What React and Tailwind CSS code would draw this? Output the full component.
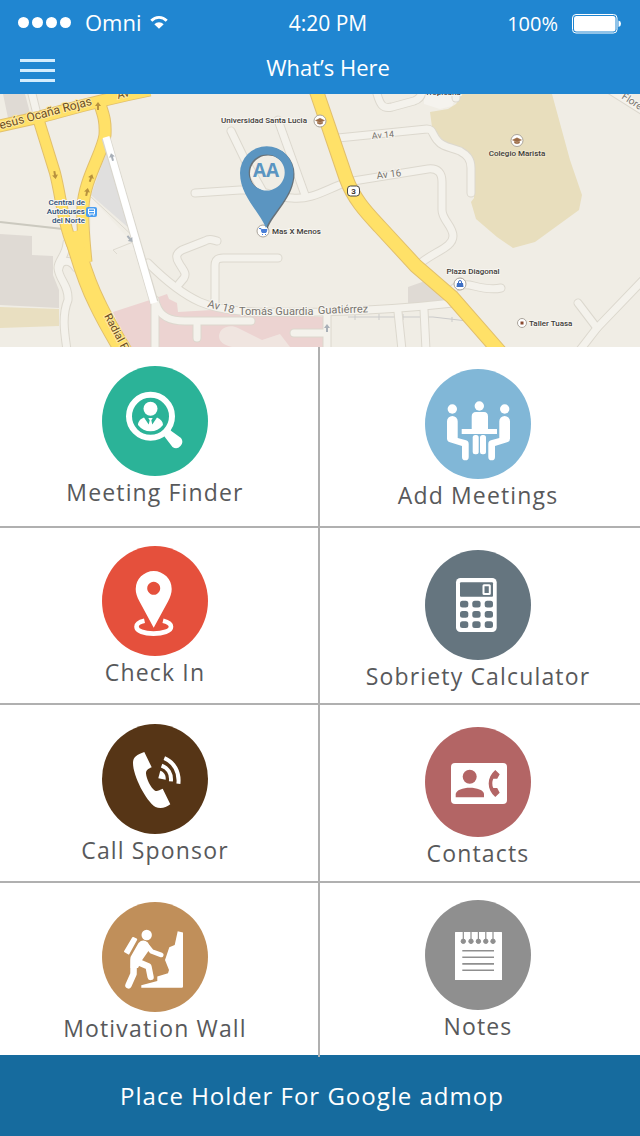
import React from "react";

const minorRoads = [
  "M31 90 L39 122",
  "M67 243 C66 256 58 260 58 268 C59 280 69 285 68 300 C62 315 64 330 67 350",
  "M76 268 C70 258 60 260 59 268",
  "M338 138 L427 129 C433 129 432 134 437 140 C443 148 452 147 460 151 C467 155 471 159 471 168 V193",
  "M195 193 L240 190 C262 189 275 197 292 198 C312 200 325 190 347 182 L428 169 C438 168 442 173 442 182 V210 C442 220 453 226 453 236 C453 247 436 251 422 262",
  "M231 131 L245 160 L262 190",
  "M278 120 L305 195",
  "M217 241 C212 240 210 238 205 241 L182 250 C175 254 176 258 179 263 C183 270 187 273 184 278 L179 284",
  "M278 258 H223 C217 258 215 260 215 266 V304",
  "M155 300 V350",
  "M156 304 C160 317 170 321 185 321 H251",
  "M197 322 V338",
  "M325 333 H294",
  "M327 313 V350",
  "M398 312 L402 350",
  "M424 310 L426 350",
  "M452 290 C458 284 466 284 474 286 S492 290 501 288",
  "M645 278 L597 328 L580 350",
  "M578 303 L597 328",
  "M376 90 C380 106 383 109 392 107 L414 101 C420 99 422 95 422 90",
  "M610 90 L645 112",
  "M456 88 V98",
  "M148 263 C160 275 180 293 200 302 C230 315 270 312 320 312 C360 311 400 309 453 303",
];

const yellowRoads = [
  { d: "M-5 127 L40 117 C60 112 95 101 150 90", w: 11 },
  { d: "M38 118 L55 173 C62 200 63 230 78 257", w: 10 },
  { d: "M98 98 C102 112 106 118 105 135 C103 152 84 180 83 207 C82 225 84 240 86 262", w: 11 },
  { d: "M72 232 C80 262 88 285 97 303 C105 320 112 332 124 352", w: 16 },
  { d: "M316 90 L328 125 L346 178 C354 200 368 214 380 227 L416 266 L452 297 L500 352", w: 13 },
];

function Poi({ x, y, children }) {
  return (
    <g>
      <circle cx={x} cy={y} r="6" fill="#fff" stroke="#aaa49b" />
      {children}
    </g>
  );
}

function Cap({ x, y }) {
  return (
    <path
      d={`M${x - 4.5} ${y - 0.5} l4.5 -2.2 l4.5 2.2 l-4.5 2 z M${x - 2.5} ${y + 1} v1.5 q2.5 1.5 5 0 v-1.5 l-2.5 1z`}
      fill="#9b6a45"
      stroke="#9b6a45"
      strokeWidth="0.5"
    />
  );
}

function Arrow({ x, y, angle = 0, fill = "#b8923e" }) {
  return (
    <path
      d="M0 -4 L3 0 H1 V4 H-1 V0 H-3Z"
      fill={fill}
      transform={`translate(${x} ${y}) rotate(${angle})`}
    />
  );
}

function MapView() {
  return (
    <svg
      viewBox="0 94 640 253"
      className="block w-full font-[Roboto,sans-serif]"
      role="img"
      aria-label="Map of nearby meetings"
    >
      <rect y="94" width="640" height="253" fill="#f0ede5" />
      <path d="M3 94 H25 L30 113 L8 118Z M0 234 L32 236 V255 L53 256 V275 L59 290 V308 L0 305Z M408 287 L425 281 L450 303 L408 304Z" fill="#dfdad4" />
      <path d="M0 307 L59 309 V326 L0 328Z" fill="#e9dfc1" />
      <path d="M107 150 L91 195 L139 237Z" fill="#e0dfde" />
      <path d="M91 197 L139 250 L91 250Z" fill="#f3f0ea" />
      <path d="M91 197 L137 240 M138 240 L113 250 L117 254" fill="none" stroke="#dedad0" strokeWidth="1" />
      <path d="M113 312 L153 299 L167 294 L169 299 L177 303 L178 312 L212 310 L323 317 V347 H128Z" fill="#ecd3d1" />
      <path d="M219 336 C220 327 230 324 238 328 L262 340 L280 334 L290 347 H232 C224 345 219 342 219 336Z" fill="#f0e5e0" />
      <path d="M424 94 H458 L452 106 L440 109 L424 104Z" fill="#f5f3ee" />
      <path d="M462 94 L456 104 L448 109 L430 112 L432 127 L445 143 L462 152 L474 165 V198 L471 202 L476 219 L497 237 L513 248 L535 242 L579 210 L582 195 L570 160 L552 94Z" fill="#e8debd" />
      <path d="M0 222 L63 229" stroke="#cbc9bf" strokeWidth="2" />
      <path d="M348 317 H433 L467 321 M355 314 v6 M379 314 v6 M403 314 v6 M452 317 v5" stroke="#cbcbcb" fill="none" />

      <g fill="none" strokeLinecap="round" strokeLinejoin="round">
        {minorRoads.map((d) => (
          <path key={d} d={d} stroke="#dcd8ce" strokeWidth="9" />
        ))}
        {minorRoads.map((d) => (
          <path key={d} d={d} stroke="#f4f2ec" strokeWidth="7" />
        ))}
      </g>
      <g fill="none">
        {yellowRoads.map((r) => (
          <path key={r.d} d={r.d} stroke="#e2c06c" strokeWidth={r.w + 2} />
        ))}
        {yellowRoads.map((r) => (
          <path key={r.d} d={r.d} stroke="#ffe168" strokeWidth={r.w} />
        ))}
        <path d="M106 138 L154 302" stroke="#d9d6cd" strokeWidth="9" />
        <path d="M106 137 L154 303" stroke="#fff" strokeWidth="7" />
      </g>

      <Arrow x={55} y={175} angle={170} />
      <Arrow x={98} y={106} />
      <Arrow x={91} y={178} angle={18} />
      <Arrow x={87} y={192} angle={12} />
      <Arrow x={112} y={157} angle={-15} fill="#a9b0b8" />
      <Arrow x={130} y={239} angle={140} fill="#a9b0b8" />
      <Arrow x={327} y={328} fill="#a9b0b8" />

      <g fill="#6b4d1e" stroke="#ffe9a0" strokeWidth="2" paintOrder="stroke" fontSize="11">
        <text transform="translate(-6 131) rotate(-15)" fontSize="12">Jesús Ocaña Rojas</text>
        <text transform="translate(118 99) rotate(-14)">Av</text>
        <text transform="translate(104 316) rotate(62)">Radial Francisco</text>
      </g>
      <g fill="#77746e" stroke="#f7f5f0" strokeWidth="2" paintOrder="stroke">
        <text transform="translate(372 139) rotate(-5)" fontSize="9">Av 14</text>
        <text transform="translate(377 179) rotate(-7)" fontSize="10">Av 16</text>
        <text transform="translate(207 307) rotate(14)" fontSize="11">Av 18</text>
        <text x="239" y="315" fontSize="11">Tomás Guardia</text>
        <text transform="translate(318 314) rotate(-2)" fontSize="11">Guatiérrez</text>
        <text transform="translate(621 98) rotate(33)" fontSize="10">Flores</text>
      </g>
      <g fill="#3f3d3a" stroke="#f7f5f0" strokeWidth="2" paintOrder="stroke" fontSize="8" fontWeight="500">
        <text x="221" y="123">Universidad Santa Lucia</text>
        <text x="272" y="234">Mas X Menos</text>
        <text x="517" y="156" textAnchor="middle" stroke="#eee6cd">Colegio Marista</text>
        <text x="473" y="274" textAnchor="middle">Plaza Diagonal</text>
        <text x="529" y="326">Taller Tuasa</text>
        <text x="425" y="95">Tropicana</text>
      </g>
      <g fill="#2c4f78" stroke="#f7f5f0" strokeWidth="2" paintOrder="stroke" fontSize="8" fontWeight="500" textAnchor="end">
        <text x="85" y="205">Central de</text>
        <text x="85" y="214">Autobuses</text>
        <text x="85" y="223">del Norte</text>
      </g>

      <rect x="86" y="207" width="11" height="10" rx="2" fill="#4a9df0" />
      <path d="M88.5 209 h6 v5 h-6z M89 215 h1.5 M93 215 h1.5" fill="none" stroke="#fff" />
      <path d="M89 211.500 h5" stroke="#fff" />
      <Poi x={320} y={121}><Cap x={320} y={121} /></Poi>
      <Poi x={517} y={140.5}><Cap x={517} y={140.5} /></Poi>
      <Poi x={263} y={231}>
        <path d="M259 228.500 h2 l1 4 h4 l1 -3 h-5" fill="#4a7fd8" stroke="#4a7fd8" />
        <path d="M262 234.500 h1 M265 234.500 h1" stroke="#4a7fd8" />
      </Poi>
      <Poi x={460} y={284}>
        <path d="M457 283 h6 l0.500 4 h-7z" fill="#3d6fc4" />
        <path d="M458.500 283 v-1 a1.500 1.500 0 0 1 3 0 v1" fill="none" stroke="#3d6fc4" />
      </Poi>
      <circle cx="522" cy="323" r="4.500" fill="#fff" stroke="#aaa49b" />
      <rect x="520.500" y="321.500" width="3" height="3" fill="#8a4a30" />
      <rect x="347.500" y="186" width="12" height="10" rx="3" fill="#fff" stroke="#4a4844" />
      <text x="353.500" y="194" textAnchor="middle" fontSize="8" fontWeight="700" fill="#3a3834">3</text>

      <g fillRule="evenodd">
        <path
          d="M267.500 229 C262 213 241 197 241 174 A26.750 26.750 0 0 1 294.500 174 C294.500 197 273 214 267.500 229Z M268 155.500 a18 18 0 1 0 0.010 0Z"
          fill="#3a4854"
          opacity="0.75"
        />
        <path
          d="M266 228 C260 212 240 196 240 173 A26.750 26.750 0 0 1 293.500 173 C293.500 196 272 213 266 228Z M266.700 154.500 a18 18 0 1 0 0.010 0Z"
          fill="#5b95c1"
        />
        <text x="266" y="177" textAnchor="middle" fontSize="19" fontWeight="700" fill="#5b95c1" fontFamily="Open Sans, sans-serif">AA</text>
      </g>
    </svg>
  );
}

const FinderIcon = () => (
  <>
    <circle cx="48.500" cy="50.300" r="21.500" fill="none" stroke="#fff" strokeWidth="6" />
    <circle cx="48.500" cy="42.700" r="7" />
    <path d="M42 51.500 C37.500 53 36 56.500 36 59 Q41 65.300 48.500 65.300 T61 59 C61 56 59 53 55 51.500 L50.300 58.500 L49.300 54.300 L50.700 52 H46.300 L47.700 54.300 L46.700 58.500Z" />
    <path d="M61 68.500 L67 62.500 L69.300 65 L79 72 A6.300 6.300 0 0 1 70.500 81 L63 71.300Z" />
  </>
);

const seated =
  "M22 52.300 A5.300 5.300 0 0 1 32.700 52.300 V69 L41 71.300 Q43.700 72 43.700 75 V88 A3.300 3.300 0 0 1 37 88 V77 L25 73.300 Q22 72.500 22 69.500Z";

const MeetingIcon = () => (
  <>
    <circle cx="27.300" cy="40" r="4.700" />
    <circle cx="54.300" cy="37" r="4.700" />
    <circle cx="79.700" cy="40" r="4.700" />
    <path d={seated} />
    <path d={seated} transform="translate(107 0) scale(-1 1)" />
    <path d="M46.700 47.500 Q46.700 43 51 43 H59 Q63 43 63 47.500 V60 H72 V65 H36.700 V60 H46.700Z" />
    <rect x="47.700" y="66" width="6" height="19.300" rx="2.500" />
    <rect x="55" y="66" width="6" height="19.300" rx="2.500" />
  </>
);

const CheckInIcon = () => (
  <>
    <path
      d="M51.700 81.700 L37.500 55.500 C35 51 33.700 47 33.700 43 A18 18 0 0 1 69.700 43 C69.700 47 68.400 51 66 55.500Z M51.700 35.800 a6.500 6.500 0 1 0 0.010 0Z"
      fillRule="evenodd"
    />
    <path
      d="M42.500 74.700 C36.500 76 34.500 78.500 34.500 80.700 C34.500 85 42 87.600 51.500 87.600 S69 85 69 80.700 C69 78.500 66.500 76 61 74.700"
      fill="none"
      stroke="#fff"
      strokeWidth="4.600"
    />
  </>
);

const CalculatorIcon = () => (
  <>
    <rect x="31" y="28" width="40.700" height="54" rx="4.500" />
    <rect x="35" y="32.300" width="33" height="14.400" rx="1" fill="#65757f" />
    <rect x="58.500" y="35.300" width="6.300" height="8.600" rx="0.500" fill="none" stroke="#fff" strokeWidth="2" />
    {[50.7, 61, 71.3].map((y) =>
      [35, 47.3, 59.7].map((x) => (
        <rect key={`${x}-${y}`} x={x} y={y} width="8.300" height="6.700" rx="2.500" fill="#65757f" />
      )),
    )}
  </>
);

const PhoneIcon = () => (
  <>
    <path d="M42.300 28 L49.700 43.300 C46 45 44 46 44 49.500 C44.500 55 48.500 63.500 53 66.700 C55.500 67.800 57.500 65.700 60.700 64.700 L68.300 80.300 C64 84 58 85 53.500 83 C44 77 31 52 31 39 C31 33 35 30.500 42.300 28Z" />
    <path d="M56.300 54.300 L58.300 46.700 C62 48 64 51 63.700 55.800Z" />
    <path d="M59.600 41.600 C66 44 69.700 50 68.900 57.400 M62.300 34.200 C72 38 77.700 48 76.400 59.800" fill="none" stroke="#fff" strokeWidth="4" />
  </>
);

const ContactIcon = () => (
  <>
    <rect x="26" y="36" width="56" height="41" rx="4" />
    <g fill="#b36565">
      <circle cx="44.700" cy="49.700" r="7" />
      <path d="M30.700 70.300 V67 C31 63 38 60.700 44.800 60.700 S59 63 59 67 V70.300Z" />
      <path d="M70.300 43 L74.700 47.300 L72.200 51.700 H68.300 Q66.200 56.300 68.300 61 H72.200 L74.700 65.700 L70.300 70 C61.500 63 61.500 50 70.300 43Z" />
    </g>
  </>
);

const ClimberIcon = () => (
  <>
    <circle cx="44.700" cy="33" r="5.200" />
    <path d="M31 36 L34.200 37.500 L26.500 51.500 L23 49.500Z" stroke="#fff" strokeWidth="2" strokeLinejoin="round" />
    <path d="M36.500 41 Q41 36.500 45.800 40.500 L48.500 46 L40.500 57.500 L36 66 H28.500 V55Z" />
    <g fill="none" stroke="#fff" strokeLinecap="round" strokeLinejoin="round">
      <path d="M44 42.500 L49.500 49.300 L59.300 53" strokeWidth="4.600" />
      <path d="M31.700 58 L31.500 72 L26.500 83.300" strokeWidth="6.500" />
      <path d="M36 60 L46.500 64.500 L48.600 75" strokeWidth="6.300" />
    </g>
    <path d="M75.700 29.300 L81 30.600 V84.500 Q81 85.700 79.800 85.700 H39.300 V83.300 L55.300 79 V74.600 L66 71.300 L67 68 L63 58 L67.300 45.300 L72.700 43Z" />
  </>
);

const NotesIcon = () => (
  <>
    <rect x="30" y="32" width="47" height="48" rx="0.500" />
    <g fill="#8f8f8f" stroke="#8f8f8f">
      {[38.3, 46, 53.4, 60.8, 68].map((x) => (
        <g key={x}>
          <path d={`M${x} 32 V41`} strokeWidth="1.200" />
          <circle cx={x} cy="41.300" r="2.200" />
        </g>
      ))}
      <path d="M37.300 50.700 H69 M37.300 57.200 H69 M37.300 63.900 H69 M37.300 70.300 H69" strokeWidth="1.600" />
    </g>
  </>
);

const rows = [
  {
    height: "min-h-[181px]",
    tiles: [
      { label: "Meeting Finder", color: "bg-[#2bb398]", pad: "pt-[19px]", Icon: FinderIcon },
      { label: "Add Meetings", color: "bg-[#81b7d7]", pad: "pt-[22px]", Icon: MeetingIcon },
    ],
  },
  {
    height: "min-h-[177px]",
    tiles: [
      { label: "Check In", color: "bg-[#e5503c]", pad: "pt-[18px]", Icon: CheckInIcon },
      { label: "Sobriety Calculator", color: "bg-[#65757f]", pad: "pt-[22px]", Icon: CalculatorIcon },
    ],
  },
  {
    height: "min-h-[178px]",
    tiles: [
      { label: "Call Sponsor", color: "bg-[#563516]", pad: "pt-[19px]", Icon: PhoneIcon },
      { label: "Contacts", color: "bg-[#b36565]", pad: "pt-[22px]", Icon: ContactIcon },
    ],
  },
  {
    height: "min-h-[172px]",
    tiles: [
      { label: "Motivation Wall", color: "bg-[#c08f5a]", pad: "pt-[19px]", Icon: ClimberIcon },
      { label: "Notes", color: "bg-[#8f8f8f]", pad: "pt-[17px]", Icon: NotesIcon },
    ],
  },
];

function Tile({ label, color, pad, Icon }) {
  return (
    <button type="button" className={`flex w-1/2 flex-col items-center ${pad} odd:pr-2.5 even:pr-1`}>
      <span className={`block h-[110px] w-[106px] rounded-[50%] ${color}`}>
        <svg viewBox="0 0 106 110" className="block h-full w-full fill-white" aria-hidden="true">
          <Icon />
        </svg>
      </span>
      <span className="text-[23px] leading-8 font-medium tracking-wider whitespace-nowrap text-[#58595b]">
        {label}
      </span>
    </button>
  );
}

function StatusBar() {
  return (
    <div className="grid h-11 grid-cols-[1fr_auto_1fr] items-center px-[18px] text-[22px]">
      <div className="flex items-center">
        <div className="flex gap-[3px]">
          {[0, 1, 2, 3].map((i) => (
            <span key={i} className="size-[11px] rounded-full bg-white" />
          ))}
        </div>
        <span className="ml-3.5">Omni</span>
        <svg viewBox="0 0 18 14" className="ml-2 h-3.5 w-[18px]" aria-label="Wi-Fi">
          <path d="M1.300 5.800 C5.500 1.300 12.500 1.300 16.700 5.800" fill="none" stroke="#fff" strokeWidth="2.800" />
          <path d="M4.300 9.300 C7 6.600 11 6.600 13.700 9.300 L9 13.800Z" fill="#fff" />
        </svg>
      </div>
      <span className="pt-1 pl-4 text-[21px]">4:20 PM</span>
      <div className="flex items-center justify-end pt-1">
        <span className="text-[20px]">100%</span>
        <svg viewBox="0 0 50 20" className="ml-3.5 h-5 w-[50px]" aria-label="Battery full">
          <rect x="0.500" y="0.500" width="44.500" height="18.500" rx="3.500" fill="none" stroke="#fff" />
          <rect x="2" y="2" width="41.500" height="15.500" rx="2.500" fill="#fff" />
          <path d="M46.500 6.500 Q49 7 49 9.800 T46.500 13Z" fill="#fff" />
        </svg>
      </div>
    </div>
  );
}

export default function App() {
  return (
    <div className="flex min-h-screen flex-col bg-white font-['Open_Sans','Noto_Sans',sans-serif]">
      <header className="bg-[#2086d1] text-white">
        <StatusBar />
        <div className="grid h-[50px] grid-cols-[1fr_auto_1fr] items-center px-5 pb-1">
          <button type="button" aria-label="Menu" className="mt-[7px] flex w-[35px] flex-col gap-[7px] justify-self-start">
            <span className="h-[3px] bg-[#d3ecfd]" />
            <span className="h-[3px] bg-[#d3ecfd]" />
            <span className="h-[3px] bg-[#d3ecfd]" />
          </button>
          <h1 className="pl-4 text-[22px]">What’s Here</h1>
        </div>
      </header>

      <MapView />

      <main className="relative">
        {rows.map((row, i) => (
          <div
            key={i}
            className={`flex border-[#b0b0b0] ${row.height} ${i < rows.length - 1 ? "border-b-2" : ""}`}
          >
            {row.tiles.map((tile) => (
              <Tile key={tile.label} {...tile} />
            ))}
          </div>
        ))}
        <div className="absolute top-0 -bottom-0.5 left-1/2 -ml-0.5 w-0.5 bg-[#b0b0b0]" />
      </main>

      <footer className="flex min-h-[81px] grow items-center justify-center bg-[#166b9e] pr-4 text-2xl tracking-[1px] text-white">
        Place Holder For Google admop
      </footer>
    </div>
  );
}
